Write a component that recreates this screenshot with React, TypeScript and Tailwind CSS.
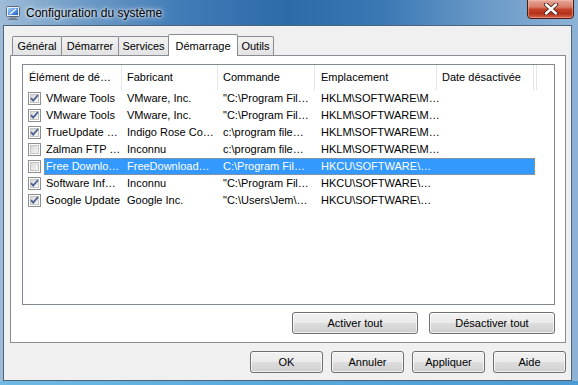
import React from 'react';

interface StartupItem {
  name: string;
  maker: string;
  command: string;
  location: string;
  enabled: boolean;
  selected?: boolean;
}

const items: StartupItem[] = [
  { name: 'VMware Tools', maker: 'VMware, Inc.', command: '"C:\\Program Fil…', location: 'HKLM\\SOFTWARE\\M…', enabled: true },
  { name: 'VMware Tools', maker: 'VMware, Inc.', command: '"C:\\Program Fil…', location: 'HKLM\\SOFTWARE\\M…', enabled: true },
  { name: 'TrueUpdate …', maker: 'Indigo Rose Co…', command: 'c:\\program file…', location: 'HKLM\\SOFTWARE\\M…', enabled: true },
  { name: 'Zalman FTP …', maker: 'Inconnu', command: 'c:\\program file…', location: 'HKLM\\SOFTWARE\\M…', enabled: false },
  { name: 'Free Downlo…', maker: 'FreeDownload…', command: 'C:\\Program Fil…', location: 'HKCU\\SOFTWARE\\…', enabled: false, selected: true },
  { name: 'Software Inf…', maker: 'Inconnu', command: '"C:\\Program Fil…', location: 'HKCU\\SOFTWARE\\…', enabled: true },
  { name: 'Google Update', maker: 'Google Inc.', command: '"C:\\Users\\Jem\\…', location: 'HKCU\\SOFTWARE\\…', enabled: true },
];

const tabs = [
  { label: 'Général', w: 'w-[50px]' },
  { label: 'Démarrer', w: 'w-[58px]' },
  { label: 'Services', w: 'w-[51px]' },
  { label: 'Démarrage', w: 'w-[70px]', active: true },
  { label: 'Outils', w: 'w-[37px]' },
];

// bouton style Windows 7
const btn =
  'h-[22px] rounded-[3px] border border-[#707070] bg-[linear-gradient(to_bottom,#f2f2f2_0%,#ebebeb_48%,#dddddd_52%,#cfcfcf_100%)] shadow-[inset_0_0_0_1px_rgba(255,255,255,0.7)] text-[11px] text-black flex items-center justify-center';

function CheckBox({ checked }: { checked: boolean }) {
  return (
    <svg width="13" height="13" viewBox="0 0 13 13" className="shrink-0">
      <defs>
        <linearGradient id="cbg" x1="0" y1="0" x2="1" y2="1">
          <stop offset="0" stopColor="#d6d6d6" />
          <stop offset="1" stopColor="#f8f8f8" />
        </linearGradient>
      </defs>
      <rect x="0.5" y="0.5" width="12" height="12" fill="#fff" stroke="#8e8f8f" />
      <rect x="2.5" y="2.5" width="8" height="8" fill="url(#cbg)" stroke="#c4c4c4" />
      {checked && (
        <path d="M3 6.2 L5.2 8.6 L10 3" fill="none" stroke="#4a5f92" strokeWidth="1.8" />
      )}
    </svg>
  );
}

function TitleIcon() {
  return (
    <svg width="16" height="16" viewBox="0 0 16 16" className="shrink-0">
      <defs>
        <linearGradient id="scr" x1="0" y1="0" x2="1" y2="1">
          <stop offset="0" stopColor="#9fd3ff" />
          <stop offset="1" stopColor="#1d5fc4" />
        </linearGradient>
      </defs>
      <rect x="1.5" y="1.5" width="13" height="10" rx="1" fill="#e8eef4" stroke="#5b6a7c" />
      <rect x="3" y="3" width="10" height="7" fill="url(#scr)" />
      <path d="M5 9 L11 4" stroke="#ffffff" strokeWidth="1.2" />
      <rect x="5" y="12" width="6" height="2" fill="#8a96a4" />
      <rect x="3.5" y="13.5" width="9" height="1.5" fill="#6d7a88" />
    </svg>
  );
}

function CloseButton() {
  return (
    <div className="ml-auto mr-[4px] self-start -mt-[1px] w-[47px] h-[20px] rounded-b-[4px] border border-[#4b1a12] bg-[linear-gradient(to_bottom,#e7a899_0%,#d77a66_40%,#c2432a_52%,#b5321a_75%,#d4634a_100%)] shadow-[inset_0_0_0_1px_rgba(255,200,190,0.45)] flex items-center justify-center">
      <svg width="16" height="12" viewBox="0 0 16 12">
        <path d="M3 1.5 L13 10.5 M13 1.5 L3 10.5" stroke="#4a2018" strokeWidth="4.2" strokeLinecap="round" />
        <path d="M3 1.5 L13 10.5 M13 1.5 L3 10.5" stroke="#ffffff" strokeWidth="2.4" strokeLinecap="round" />
      </svg>
    </div>
  );
}

export default function App() {
  return (
    <div className="w-[578px] h-[385px] overflow-hidden flex flex-col bg-[linear-gradient(to_right,#9fbcd8_0%,#6e9bc7_14%,#3f7bb6_32%,#2c6aa8_50%,#3a78b4_66%,#6a9ac8_84%,#8db2d6_100%)] font-['Liberation_Sans',Arial,sans-serif]">
      {/* barre de titre */}
      <div className="h-[25px] flex items-center shrink-0">
        <div className="ml-[5px] mt-[1px]">
          <TitleIcon />
        </div>
        <span className="ml-[5px] text-[12px] text-black [text-shadow:0_0_6px_#ffffff,0_0_3px_#ffffff]">
          Configuration du système
        </span>
        <CloseButton />
      </div>

      {/* zone client */}
      <div className="ml-[3px] w-[569px] h-[356px] shrink-0 border border-[#4f6479] bg-[#f0f0f0] flex flex-col">
        {/* onglets */}
        <div className="flex items-end pl-[8px] pt-[8px] h-[29px] text-[11px] text-black">
          {tabs.map((t, i) =>
            t.active ? (
              <div
                key={t.label}
                className={`${t.w} h-[22px] -mb-px -ml-px relative z-10 border border-b-0 border-[#898c95] bg-white flex items-start justify-center pt-[3px] rounded-t-[2px]`}
              >
                {t.label}
              </div>
            ) : (
              <div
                key={t.label}
                className={`${t.w} h-[19px] ${i > 0 ? '-ml-px' : ''} border border-b-0 border-[#898c95] bg-[linear-gradient(to_bottom,#f2f2f2,#e3e3e3)] flex items-center justify-center rounded-t-[2px]`}
              >
                {t.label}
              </div>
            )
          )}
        </div>

        {/* panneau */}
        <div className="ml-[6px] w-[556px] h-[288px] border border-[#898c95] bg-white flex flex-col">
          {/* liste */}
          <div className="ml-[11px] mt-[8px] w-[533px] h-[241px] border border-[#828790] bg-white text-[11px] text-black overflow-hidden">
            <div className="flex h-[25px]">
              <div className="w-[99px] border-r border-[#e3e6ea] pl-[6px] flex items-center">Élément de dé…</div>
              <div className="w-[96px] border-r border-[#e3e6ea] pl-[5px] flex items-center">Fabricant</div>
              <div className="w-[97px] border-r border-[#e3e6ea] pl-[5px] flex items-center">Commande</div>
              <div className="w-[122px] border-r border-[#e3e6ea] pl-[6px] flex items-center">Emplacement</div>
              <div className="w-[97px] border-r border-[#e3e6ea] pl-[5px] flex items-center">Date désactivée</div>
              <div className="w-[3px] border-r border-[#e3e6ea]" />
            </div>
            {items.map((it, i) => (
              <div key={i} className="flex h-[17px] items-center">
                <div className="w-[21px] pl-[5px] flex items-center">
                  <CheckBox checked={it.enabled} />
                </div>
                <div
                  className={`flex h-[17px] items-center w-[491px] whitespace-nowrap ${
                    it.selected ? 'bg-[#3399ff] text-white border border-dotted border-[#c98e52]' : 'border border-transparent'
                  }`}
                >
                  <div className="w-[77px] pl-px">{it.name}</div>
                  <div className="w-[96px] pl-[5px]">{it.maker}</div>
                  <div className="w-[97px] pl-[5px]">{it.command}</div>
                  <div className="w-[122px] pl-[6px]">{it.location}</div>
                  <div className="w-[97px]" />
                </div>
              </div>
            ))}
          </div>

          <div className="flex justify-end gap-[11px] pr-[10px] mt-[7px]">
            <div className={`${btn} w-[126px]`}>Activer tout</div>
            <div className={`${btn} w-[126px]`}>Désactiver tout</div>
          </div>
        </div>

        {/* boutons du bas */}
        <div className="flex justify-end gap-[8px] pr-[5px] mt-[8px]">
          <div className={`${btn} w-[73px] border-[#3c7fb1] shadow-[inset_0_0_0_1px_#9fd8f6]`}>OK</div>
          <div className={`${btn} w-[73px]`}>Annuler</div>
          <div className={`${btn} w-[73px]`}>Appliquer</div>
          <div className={`${btn} w-[73px]`}>Aide</div>
        </div>
      </div>

      {/* bordure inférieure */}
      <div className="flex-1 bg-[linear-gradient(to_right,#6fb9e4,#58a8dc_50%,#4b9bd4)]" />
    </div>
  );
}
